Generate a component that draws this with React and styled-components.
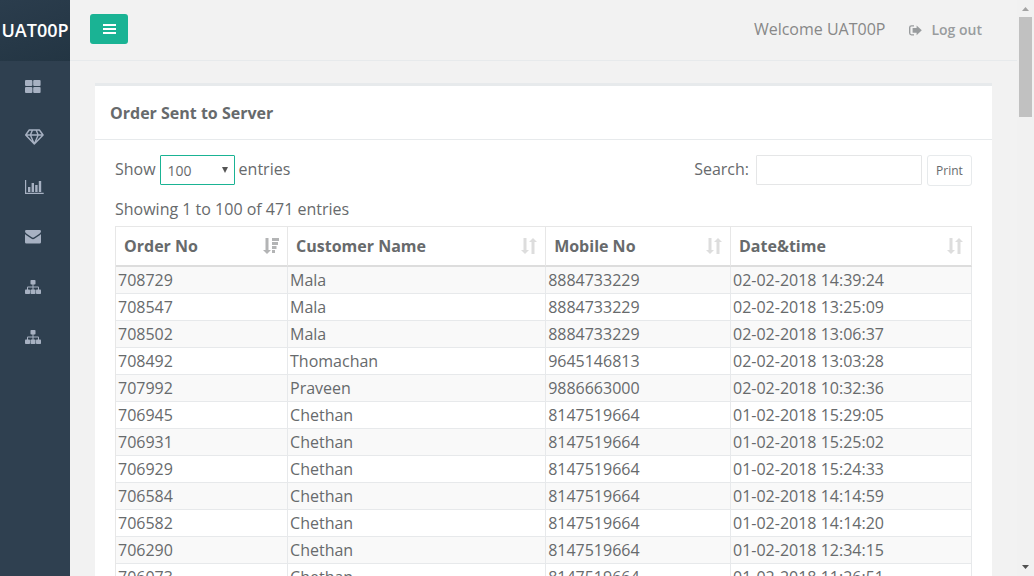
import React from "react";
import styled, { createGlobalStyle } from "styled-components";

const GlobalStyle = createGlobalStyle`
  *, *::before, *::after { box-sizing: border-box; }
  html, body { margin: 0; height: 100%; overflow: hidden; }
  body {
    background: #f2f2f2;
    color: #676a6c;
    font-family: "Open Sans", "Liberation Sans", sans-serif;
    font-size: 16px;
    line-height: 22px;
  }
  button, input, select { font-family: inherit; color: inherit; margin: 0; }
`;

const Shell = styled.div`
  display: grid;
  grid-template-columns: 70px minmax(0, 1fr) 17px;
  height: 100vh;
  overflow: hidden;
`;

const Sidebar = styled.nav`
  background: #2f4050;
`;

const Brand = styled.div`
  display: flex;
  align-items: center;
  justify-content: center;
  height: 61px;
  padding-bottom: 2px;
  background: linear-gradient(160deg, #2b3d4d, #233543);
  color: #fff;
  font-size: 18px;
  font-weight: 600;
`;

const Menu = styled.ul`
  list-style: none;
  margin: 0;
  padding: 0;
`;

const MenuLink = styled.a`
  display: flex;
  align-items: center;
  height: 50px;
  padding: 1px 0 0 25px;
  color: #a7b1c2;
`;

const Page = styled.main`
  overflow: hidden;
`;

const TopBar = styled.header`
  display: flex;
  align-items: center;
  height: 61px;
  padding: 0 35px 2px 20px;
  border-bottom: 1px solid #e7eaec;
  color: #888;
`;

const MenuToggle = styled.button`
  display: flex;
  align-items: center;
  justify-content: center;
  width: 38px;
  height: 30px;
  padding: 0;
  border: 0;
  border-radius: 3px;
  background: #1ab394;
  color: #fff;
`;

const Welcome = styled.span`
  margin-left: auto;
`;

const LogOut = styled.a`
  display: flex;
  align-items: center;
  gap: 9px;
  margin-left: 24px;
  padding-top: 2px;
  color: #999c9e;
  font-size: 14px;
  font-weight: 600;
  text-decoration: none;
`;

const Card = styled.section`
  margin: 22px 25px;
  background: #fff;
  border-top: 3px solid #e7eaec;
`;

const CardTitle = styled.h5`
  margin: 0;
  padding: 16px 15px 15px;
  border-bottom: 1px solid #e7eaec;
  font-size: 16px;
  font-weight: 700;
`;

const CardBody = styled.div`
  padding: 15px 20px;
`;

const Toolbar = styled.div`
  display: flex;
  justify-content: space-between;
  align-items: flex-start;
`;

const Tools = styled.div`
  display: flex;
  gap: 5px;
`;

const Field = styled.label`
  display: flex;
  gap: ${(p) => p.$gap}px;
  line-height: 28px;
`;

const SelectBox = styled.span`
  position: relative;
  display: block;
  height: 30px;
`;

const LengthSelect = styled.select`
  appearance: none;
  display: block;
  width: 75px;
  height: 30px;
  padding: 0 7px;
  border: 1px solid #1ab394;
  border-radius: 1px;
  background: #fff;
  font-size: 14px;
`;

const SelectArrow = styled.svg`
  position: absolute;
  right: 7px;
  top: 12px;
  pointer-events: none;
`;

const SearchInput = styled.input`
  width: 166px;
  height: 30px;
  padding: 5px 10px;
  border: 1px solid #e5e6e7;
  border-radius: 1px;
  background: #fff;
  font-size: 14px;
`;

const PrintButton = styled.button`
  width: 45px;
  height: 31px;
  padding: 0;
  border: 1px solid #e7eaec;
  border-radius: 3px;
  background: #fff;
  font-size: 12px;
`;

const Info = styled.p`
  margin: 12px 0 6px;
`;

const Table = styled.table`
  width: 100%;
  table-layout: fixed;
  border-collapse: separate;
  border-spacing: 0;
  border: solid #e7e7e7;
  border-width: 1px 0 0 1px;
`;

const Col = styled.col`
  width: ${(p) => p.$width};
`;

const HeadCell = styled.th`
  height: 40px;
  padding: 0 8px;
  border: solid #e7e7e7;
  border-width: 0 1px 2px 0;
  border-bottom-color: #ddd;
  font-weight: 700;
  text-align: left;
`;

const HeadContent = styled.div`
  display: flex;
  align-items: center;
  justify-content: space-between;
`;

const Row = styled.tr`
  &:nth-child(odd) { background: #f9f9f9; }
`;

const Cell = styled.td`
  height: 27px;
  padding: 2px;
  border: solid #e7e9eb;
  border-width: 0 1px 1px 0;
`;

const ScrollTrack = styled.div`
  display: flex;
  flex-direction: column;
  align-items: center;
  justify-content: space-between;
  padding: 7px 0;
  background: #f1f1f1;
`;

const ScrollTop = styled.div`
  display: flex;
  flex-direction: column;
  align-items: center;
  gap: 6px;
`;

const ScrollThumb = styled.div`
  width: 13px;
  height: 100px;
  background: #c1c1c1;
`;

const GridIcon = () => (
  <svg width="16" height="14" viewBox="0 0 16 14" fill="currentColor" aria-hidden="true">
    <rect x="0" y="0" width="7.400" height="6" rx="1" />
    <rect x="8.200" y="0" width="7.400" height="6" rx="1" />
    <rect x="0" y="7" width="7.400" height="6" rx="1" />
    <rect x="8.200" y="7" width="7.400" height="6" rx="1" />
  </svg>
);

const DiamondIcon = () => (
  <svg width="19" height="16" viewBox="0 0 19 16" fill="none" stroke="currentColor" strokeWidth="1.400" strokeLinejoin="round" aria-hidden="true">
    <path d="M4.200 1h10.200l3.700 5-8.800 9L.7 6z M.7 6h17.400 M7.500 1 5.400 6l3.900 9 3.900-9-2.100-5" />
  </svg>
);

const ChartIcon = () => (
  <svg width="19" height="14" viewBox="0 0 19 14" fill="currentColor" aria-hidden="true">
    <path d="M0 0h1.200v12.800h17.500V14H0z M3 7h2.400v5H3z M6.600 3H9v9H6.600z M10.200 5h2.400v7h-2.400z M13.800 1h2.400v11h-2.400z" />
  </svg>
);

const MailIcon = () => (
  <svg width="16" height="14" viewBox="0 0 16 14" fill="currentColor" aria-hidden="true">
    <path d="M1.300 0h13.400Q16 0 16 1.300q0 1.300-1.600 2.500L9.600 7.100Q8.700 7.800 8 7.800T6.400 7.100L1.600 3.800Q0 2.600 0 1.300 0 0 1.300 0z M0 4.100q.4.400 1 .8l4.900 3.400Q7.100 9.200 8 9.200t2.100-.9L15 4.900q.6-.4 1-.8v8.100q0 1.400-1.400 1.400H1.400Q0 13.600 0 12.200z" />
  </svg>
);

const SitemapIcon = () => (
  <svg width="16" height="14" viewBox="0 0 16 14" fill="currentColor" aria-hidden="true">
    <rect x="5.500" y="0" width="5" height="4.500" rx=".8" />
    <rect x="0" y="9.500" width="5" height="4.500" rx=".8" />
    <rect x="5.500" y="9.500" width="5" height="4.500" rx=".8" />
    <rect x="11" y="9.500" width="5" height="4.500" rx=".8" />
    <path d="M7.500 4h1v2.500H13q1 0 1 1V10h-1V7.500H8.500V10h-1V7.500H3V10H2V7.500q0-1 1-1h4.500z" />
  </svg>
);

const BarsIcon = () => (
  <svg width="13" height="10" viewBox="0 0 13 10" fill="currentColor" aria-hidden="true">
    <path d="M0 0h13v2H0z M0 4h13v2H0z M0 8h13v2H0z" />
  </svg>
);

const SignOutIcon = () => (
  <svg width="13" height="11" viewBox="0 0 13 11" fill="currentColor" aria-hidden="true">
    <path d="M5 .2v1.200H2.500Q1.400 1.400 1.400 2.500v5.500q0 1.200 1.100 1.200H5v1.200H2.500Q0 10.400 0 8V2.500Q0 .2 2.500.2z M7.600.4l5.200 4.900-5.200 4.900V7.700H3.600V2.900h4z" />
  </svg>
);

const SortIcon = () => (
  <svg width="16" height="16" viewBox="0 0 16 16" fill="#ddd" aria-hidden="true">
    <path d="M2.500 0h3v12H8l-4 4-4-4h2.500z M12 0l4 4h-2.500v12h-3V4H8z" />
  </svg>
);

const SortDescIcon = () => (
  <svg width="16" height="16" viewBox="0 0 16 16" fill="#b3b4b5" aria-hidden="true">
    <path d="M2.500 0h3v12H8l-4 4-4-4h2.500z M9 0h7v3H9z M9 4h6v3H9z M9 8h4.500v3H9z M9 12h3v3H9z" />
  </svg>
);

const menu = [
  ["Dashboard", GridIcon],
  ["Products", DiamondIcon],
  ["Reports", ChartIcon],
  ["Messages", MailIcon],
  ["Network", SitemapIcon],
  ["Structure", SitemapIcon],
];

const columns = [
  ["Order No", "20.1%"],
  ["Customer Name", "30.15%"],
  ["Mobile No", "21.6%"],
  ["Date&time", "28.15%"],
];

const orders = [
  ["708729", "Mala", "8884733229", "02-02-2018 14:39:24"],
  ["708547", "Mala", "8884733229", "02-02-2018 13:25:09"],
  ["708502", "Mala", "8884733229", "02-02-2018 13:06:37"],
  ["708492", "Thomachan", "9645146813", "02-02-2018 13:03:28"],
  ["707992", "Praveen", "9886663000", "02-02-2018 10:32:36"],
  ["706945", "Chethan", "8147519664", "01-02-2018 15:29:05"],
  ["706931", "Chethan", "8147519664", "01-02-2018 15:25:02"],
  ["706929", "Chethan", "8147519664", "01-02-2018 15:24:33"],
  ["706584", "Chethan", "8147519664", "01-02-2018 14:14:59"],
  ["706582", "Chethan", "8147519664", "01-02-2018 14:14:20"],
  ["706290", "Chethan", "8147519664", "01-02-2018 12:34:15"],
  ["706073", "Chethan", "8147519664", "01-02-2018 11:26:51"],
];

export default function App() {
  return (
    <>
      <GlobalStyle />
      <Shell>
        <Sidebar>
          <Brand>UAT00P</Brand>
          <Menu>
            {menu.map(([label, Icon]) => (
              <li key={label}>
                <MenuLink href="#" aria-label={label}><Icon /></MenuLink>
              </li>
            ))}
          </Menu>
        </Sidebar>
        <Page>
          <TopBar>
            <MenuToggle type="button" aria-label="Toggle menu"><BarsIcon /></MenuToggle>
            <Welcome>Welcome UAT00P</Welcome>
            <LogOut href="#"><SignOutIcon />Log out</LogOut>
          </TopBar>
          <Card>
            <CardTitle>Order Sent to Server</CardTitle>
            <CardBody>
              <Toolbar>
                <Field $gap={4}>
                  Show
                  <SelectBox>
                    <LengthSelect defaultValue="100">
                      <option>10</option>
                      <option>25</option>
                      <option>50</option>
                      <option>100</option>
                    </LengthSelect>
                    <SelectArrow width="6" height="6" viewBox="0 0 6 6" fill="#555">
                      <path d="M0 0h6L3 6z" />
                    </SelectArrow>
                  </SelectBox>
                  entries
                </Field>
                <Tools>
                  <Field $gap={7}>
                    Search:
                    <SearchInput type="search" />
                  </Field>
                  <PrintButton type="button">Print</PrintButton>
                </Tools>
              </Toolbar>
              <Info>Showing 1 to 100 of 471 entries</Info>
              <Table>
                <colgroup>
                  {columns.map(([name, width]) => <Col key={name} $width={width} />)}
                </colgroup>
                <thead>
                  <tr>
                    {columns.map(([name], i) => (
                      <HeadCell key={name} scope="col">
                        <HeadContent>
                          {name}
                          {i === 0 ? <SortDescIcon /> : <SortIcon />}
                        </HeadContent>
                      </HeadCell>
                    ))}
                  </tr>
                </thead>
                <tbody>
                  {orders.map((order) => (
                    <Row key={order[0]}>
                      {order.map((value, i) => <Cell key={columns[i][0]}>{value}</Cell>)}
                    </Row>
                  ))}
                </tbody>
              </Table>
            </CardBody>
          </Card>
        </Page>
        <ScrollTrack aria-hidden="true">
          <ScrollTop>
            <svg width="7" height="4" viewBox="0 0 7 4" fill="#a3a3a3"><path d="M3.500 0 7 4H0z" /></svg>
            <ScrollThumb />
          </ScrollTop>
          <svg width="7" height="4" viewBox="0 0 7 4" fill="#505050"><path d="M0 0h7L3.500 4z" /></svg>
        </ScrollTrack>
      </Shell>
    </>
  );
}
